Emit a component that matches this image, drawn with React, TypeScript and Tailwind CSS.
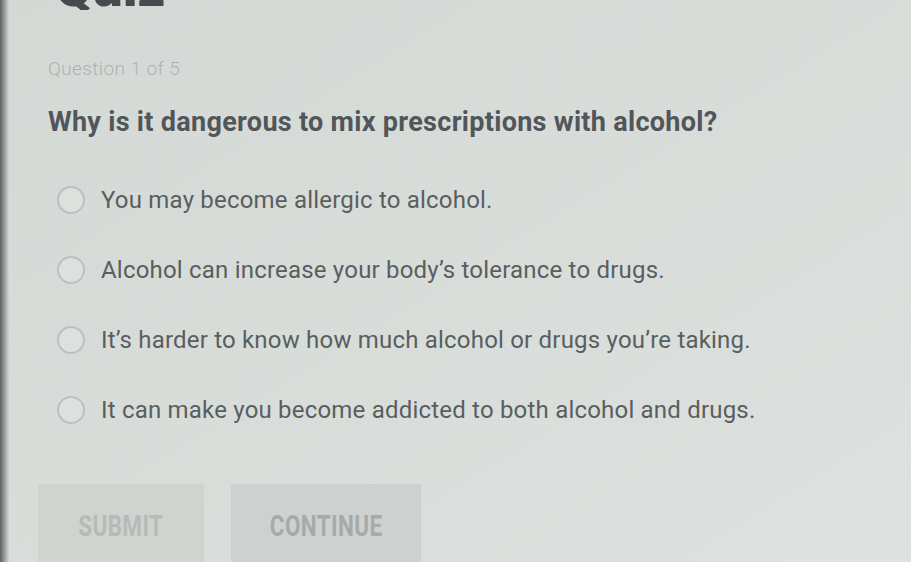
import React, { useState } from 'react';

const options = [
  'You may become allergic to alcohol.',
  'Alcohol can increase your body\u2019s tolerance to drugs.',
  'It\u2019s harder to know how much alcohol or drugs you\u2019re taking.',
  'It can make you become addicted to both alcohol and drugs.',
];

const App: React.FC = () => {
  const [selected, setSelected] = useState<number | null>(null);

  return (
    <div className="flex h-[562px] w-[911px] overflow-hidden bg-gradient-to-br from-[#d5d9d6] via-[#d9ddda] to-[#dde1df] font-['Roboto','Liberation_Sans',sans-serif]">
      {/* screen edge */}
      <div className="w-[9px] shrink-0 bg-gradient-to-r from-[#5e6262] via-[#9a9e9d] to-[#d3d7d4]" />

      <div className="flex flex-1 flex-col pl-[39px]">
        {/* Title, scrolled mostly out of view */}
        <div className="h-[10px] shrink-0 overflow-hidden">
          <h1 className="-mt-[39px] ml-[7px] text-[54px] font-black leading-[54px] text-[#464b4d]">Quiz</h1>
        </div>

        <p className="mt-[49px] h-[20px] text-[19px] font-light leading-[20px] tracking-[0.4px] text-[#adb2b1]">Question 1 of 5</p>

        <h2 className="mt-[27px] h-[32px] text-[27px] font-bold leading-[32px] tracking-[0.3px] text-[#50565a]">
          Why is it dangerous to mix prescriptions with alcohol?
        </h2>

        {/* Answers */}
        <div className="mt-[48px] ml-[9px] flex flex-col gap-[42px]">
          {options.map((opt, i) => (
            <button
              key={opt}
              onClick={() => setSelected(i)}
              className="flex h-[28px] items-center gap-[16px] text-left"
            >
              <span className="flex h-[28px] w-[28px] shrink-0 items-center justify-center rounded-full border-2 border-[#bcc0bf] bg-[#dde1de]">
                {selected === i && <span className="h-[14px] w-[14px] rounded-full bg-[#6b7072]" />}
              </span>
              <span className="text-[24px] leading-[28px] tracking-[0.2px] text-[#595e60]">{opt}</span>
            </button>
          ))}
        </div>

        {/* Actions */}
        <div className="mt-[60px] -ml-[10px] flex gap-[27px]">
          <button className="flex h-[84px] w-[166px] shrink-0 items-center justify-center bg-[#d0d4cf]">
            <span className="scale-x-75 text-[30px] font-bold leading-none tracking-[0.5px] text-[#b6bbb8]">SUBMIT</span>
          </button>
          <button className="flex h-[84px] w-[190px] shrink-0 items-center justify-center bg-[#cdd1cf]">
            <span className="scale-x-75 text-[30px] font-bold leading-none tracking-[0.5px] text-[#a6abaa]">CONTINUE</span>
          </button>
        </div>
      </div>
    </div>
  );
};

export default App;
